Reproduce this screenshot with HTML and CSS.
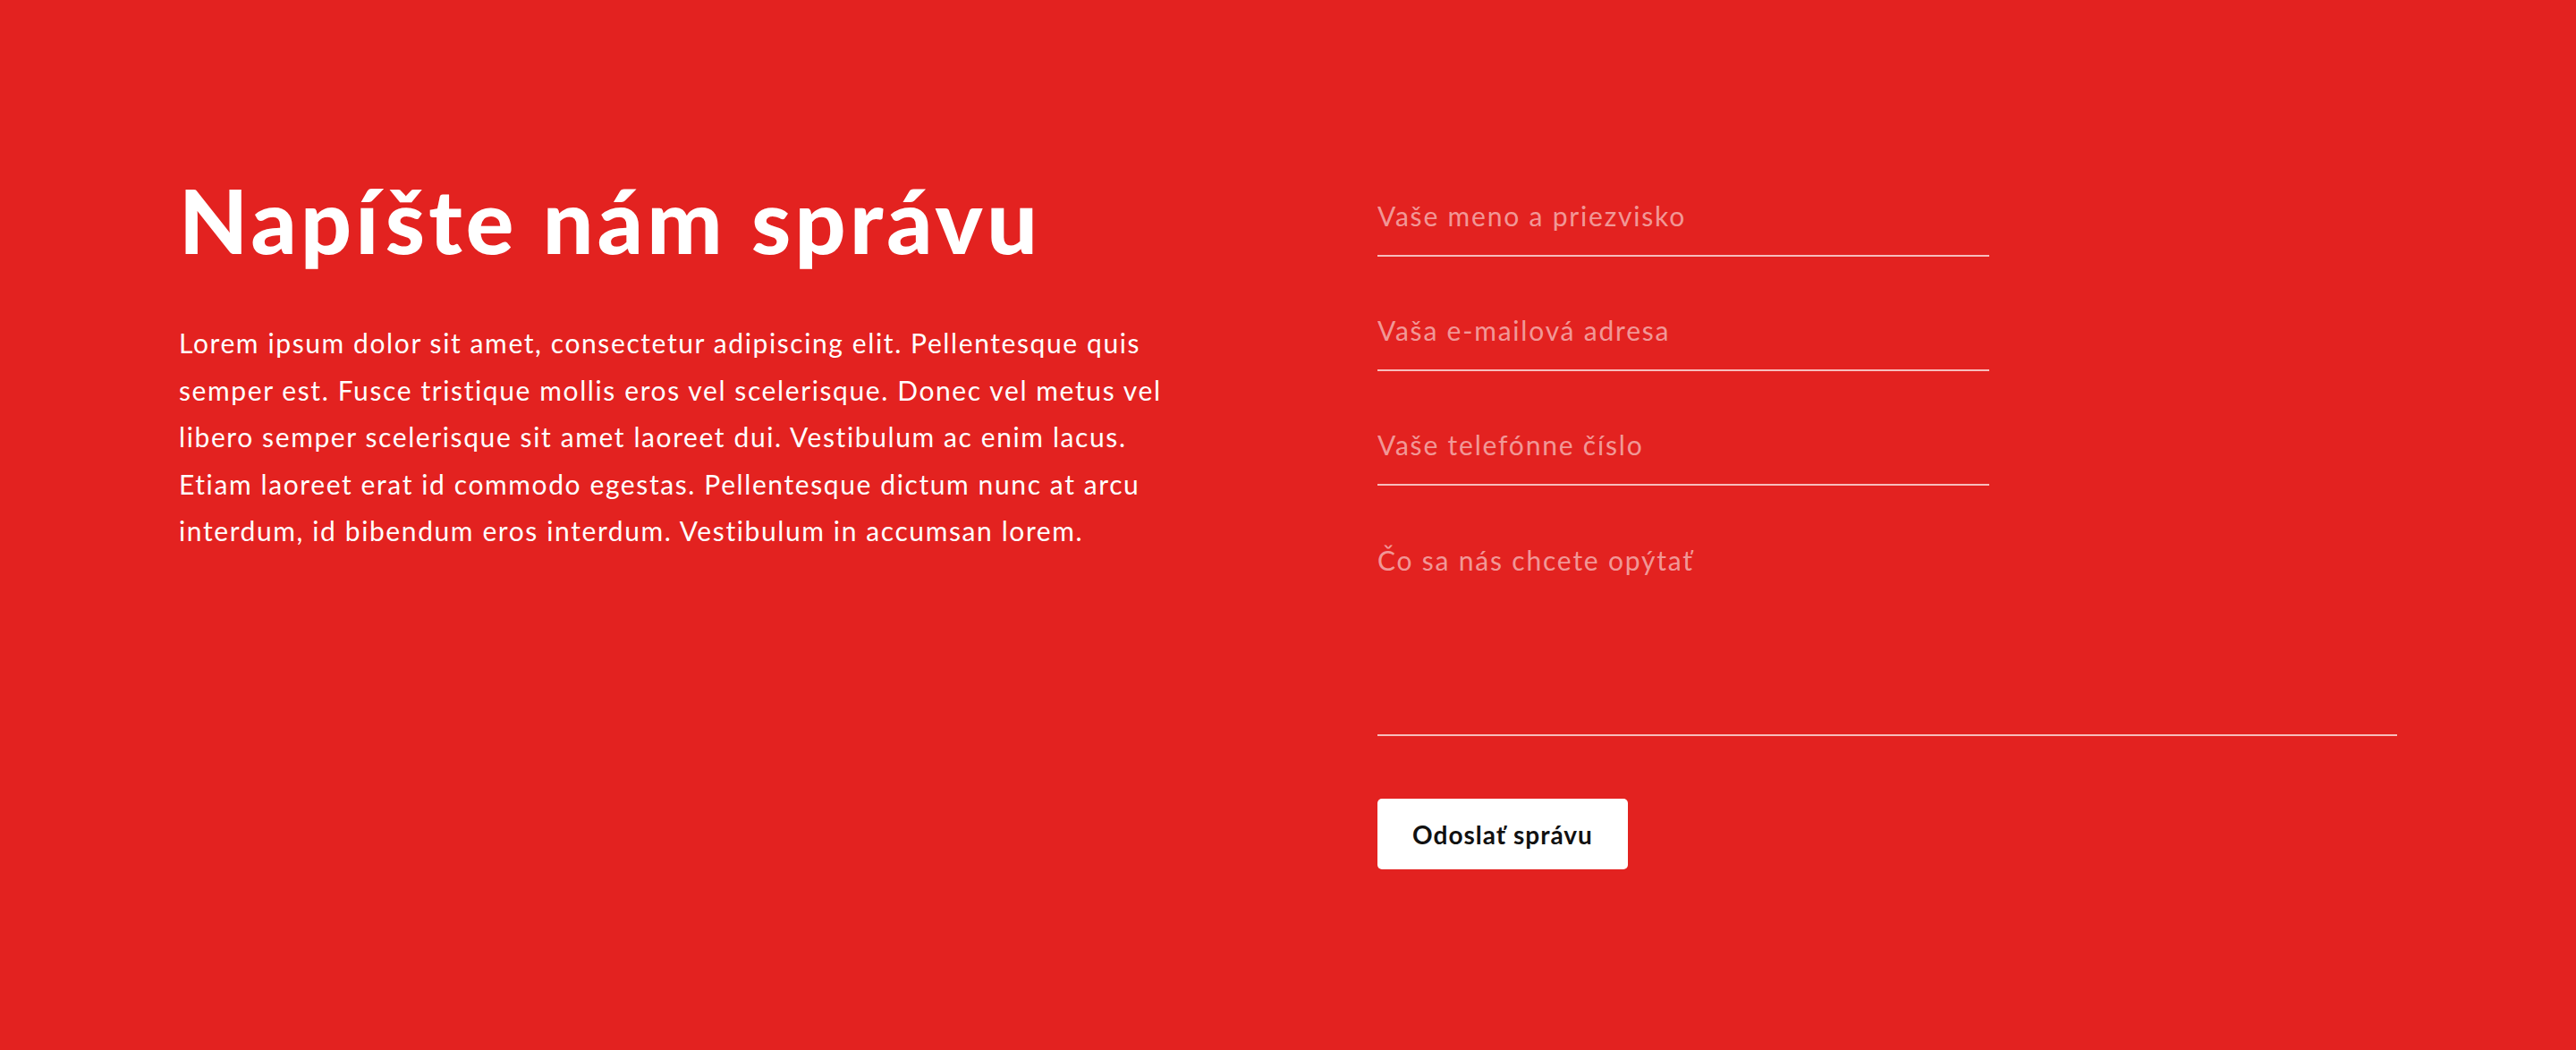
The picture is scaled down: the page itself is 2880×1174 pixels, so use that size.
FILE: index.html
```html
<!DOCTYPE html>
<html lang="sk">
<head>
<meta charset="utf-8">
<title>Napíšte nám správu</title>
<link rel="stylesheet" href="styles.css">
</head>
<body>
<section class="contact">
  <div class="contact__intro">
    <h1 class="contact__title">Napíšte nám správu</h1>
    <p class="contact__text">Lorem ipsum dolor sit amet, consectetur adipiscing elit. Pellentesque quis semper est. Fusce tristique mollis eros vel scelerisque. Donec vel metus vel libero semper scelerisque sit amet laoreet dui. Vestibulum ac enim lacus. Etiam laoreet erat id commodo egestas. Pellentesque dictum nunc at arcu interdum, id bibendum eros interdum. Vestibulum in accumsan lorem.</p>
  </div>
  <form class="contact__form">
    <input class="field field--short" type="text" placeholder="Vaše meno a priezvisko">
    <input class="field field--short" type="email" placeholder="Vaša e-mailová adresa">
    <input class="field field--short" type="tel" placeholder="Vaše telefónne číslo">
    <textarea class="field field--area" placeholder="Čo sa nás chcete opýtať"></textarea>
    <button class="contact__submit" type="button">Odoslať správu</button>
  </form>
</section>
</body>
</html>
```
FILE: styles.css
```css
* { box-sizing: border-box; }
html, body { margin: 0; padding: 0; }
body {
  background: #e32220;
  font-family: "Lato", "Noto Sans", sans-serif;
  color: #fff;
  min-height: 1174px;
}
.contact {
  display: grid;
  grid-template-columns: 1fr 1fr;
  column-gap: 200px;
  padding: 185px 200px 0;
}
.contact__title {
  margin: 0;
  font-size: 100px;
  line-height: 120px;
  font-weight: 900;
  letter-spacing: 4.3px;
  color: #fff;
}
.contact__text {
  margin: 52px 0 0;
  font-size: 30px;
  line-height: 52.5px;
  letter-spacing: 1.6px;
  color: #fff;
}
.contact__form {
  display: flex;
  flex-direction: column;
  align-items: flex-start;
  gap: 52px;
  padding-top: 26px;
}
.field {
  display: block;
  font-family: inherit;
  font-size: 30px;
  line-height: 36px;
  letter-spacing: 1.8px;
  color: #fff;
  background: transparent;
  border: 0;
  border-bottom: 2px solid rgba(255,255,255,0.7);
  border-radius: 0;
  outline: none;
  margin: 0;
}
.field::placeholder { color: rgba(255,255,255,0.55); opacity: 1; }
.field--short {
  width: 60%;
  height: 76px;
  padding: 12px 0 26px;
}
.field--area {
  width: 100%;
  height: 228px;
  padding: 13px 0 33px;
  resize: none;
}
.contact__submit {
  margin-top: 18px;
  width: 280px;
  height: 79px;
  padding: 0;
  border: 0;
  border-radius: 5px;
  background: #fff;
  color: #111;
  font-family: inherit;
  font-size: 28px;
  font-weight: 700;
  letter-spacing: 1px;
  cursor: pointer;
}
```
